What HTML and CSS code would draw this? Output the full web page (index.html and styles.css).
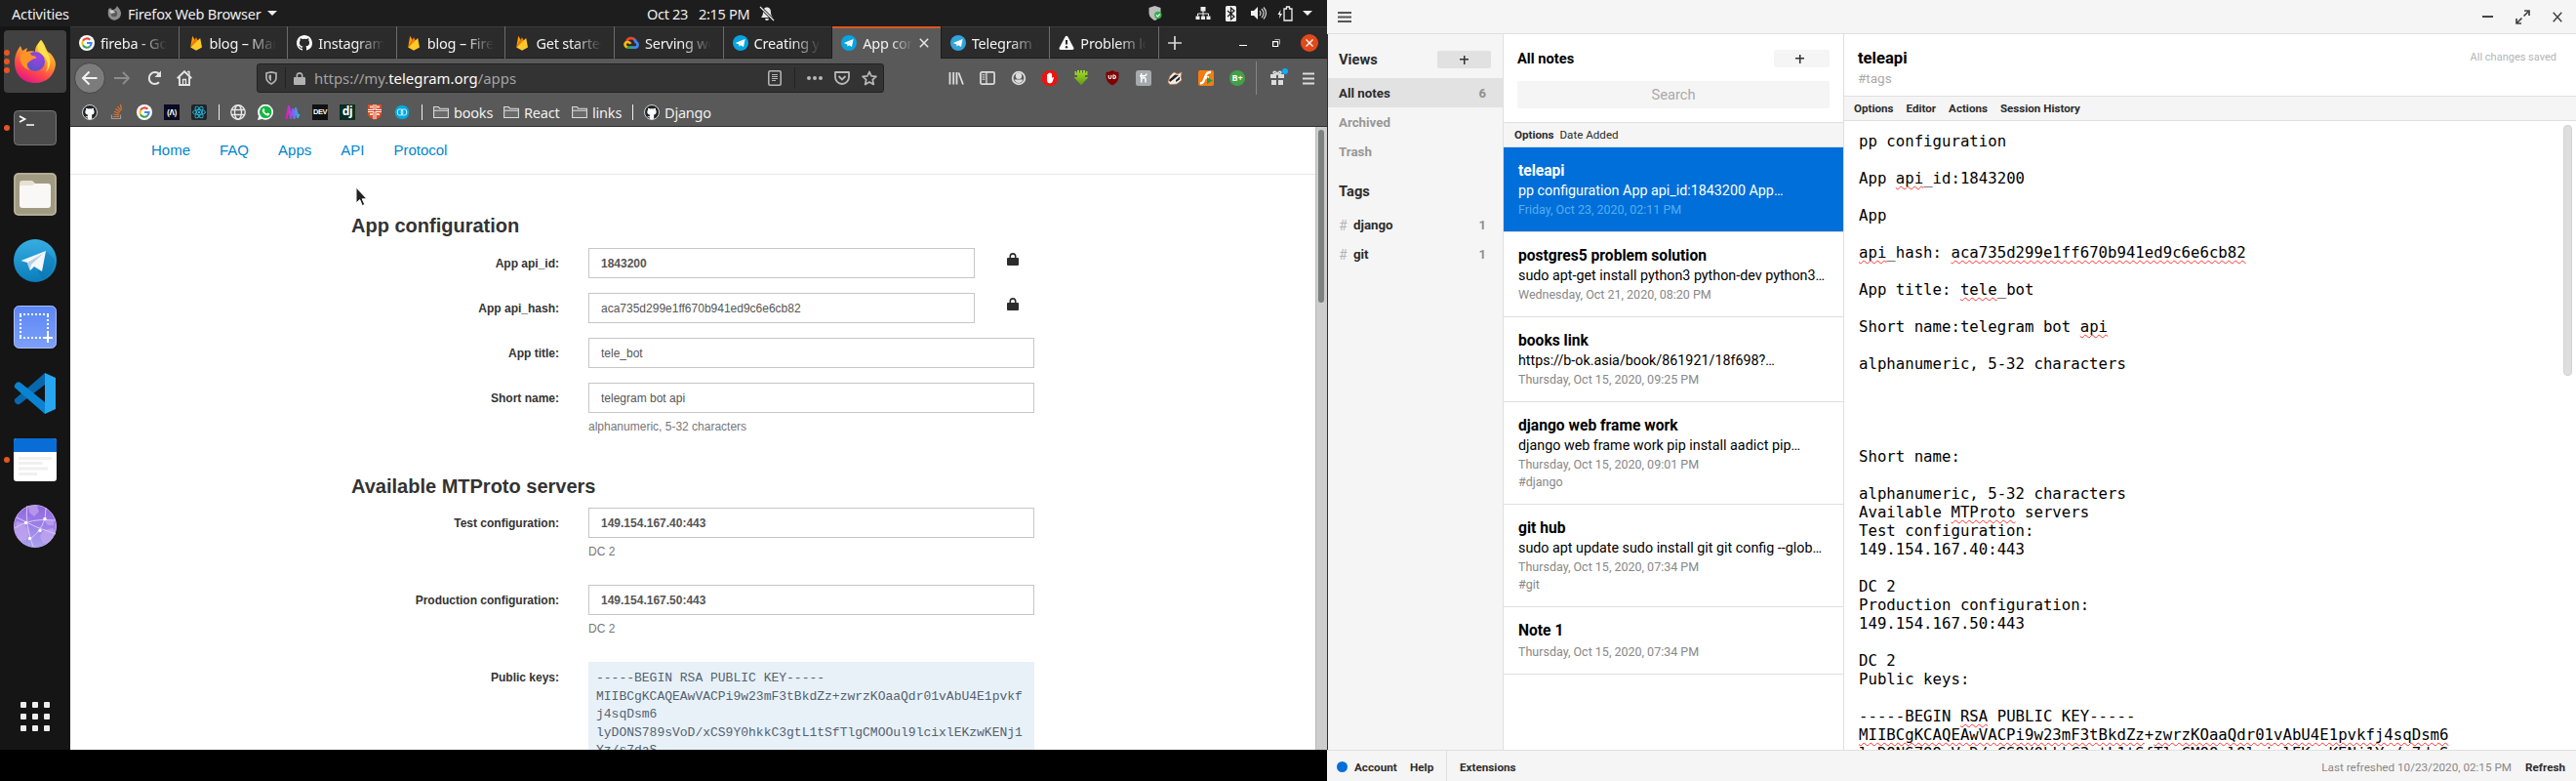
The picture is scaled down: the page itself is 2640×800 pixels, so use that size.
FILE: index.html
```
<!DOCTYPE html>
<html lang="en">
<head>
<meta charset="utf-8">
<title>Desktop</title>
<link rel="stylesheet" href="styles.css">
</head>
<body>
<svg class="defs" aria-hidden="true">
  <defs>
    <linearGradient id="fxBody" x1="0.8" y1="0" x2="0.3" y2="1"><stop offset="0" stop-color="#ffe14a"/><stop offset=".4" stop-color="#ff9a2b"/><stop offset=".7" stop-color="#ff4a48"/><stop offset="1" stop-color="#e31587"/></linearGradient>
    <radialGradient id="fxGlobe" cx=".6" cy=".3" r=".8"><stop offset="0" stop-color="#a23fe0"/><stop offset="1" stop-color="#4f55c9"/></radialGradient>
    <linearGradient id="tg" x1="0" y1="0" x2="0" y2="1"><stop offset="0" stop-color="#37aee2"/><stop offset="1" stop-color="#0a7dbb"/></linearGradient>
    <linearGradient id="shot" x1="0" y1="0" x2="0" y2="1"><stop offset="0" stop-color="#5b86f5"/><stop offset="1" stop-color="#7da0f8"/></linearGradient>
    <linearGradient id="web" x1="0" y1="0" x2="0" y2="1"><stop offset="0" stop-color="#9163e0"/><stop offset="1" stop-color="#a9a2ee"/></linearGradient>
    <linearGradient id="wave" x1="0" y1="0" x2="1" y2="0"><stop offset="0" stop-color="#e11bb8"/><stop offset=".5" stop-color="#8a5cf0"/><stop offset="1" stop-color="#17c3e6"/></linearGradient>
    <linearGradient id="dl" x1="0" y1="0" x2="0" y2="1"><stop offset="0" stop-color="#a4dc2a"/><stop offset="1" stop-color="#5f9a10"/></linearGradient>
  </defs>
  <symbol id="i-google" viewBox="0 0 16 16"><circle cx="8" cy="8" r="8" fill="#fff"/><g fill="none" stroke-width="2.1"><path d="M11.3 4.7A4.6 4.6 0 0 0 4 5.8" stroke="#ea4335"/><path d="M4 5.800a4.600 4.600 0 0 0 0 4.500" stroke="#fbbc05"/><path d="M4 10.300a4.600 4.600 0 0 0 7 1.300" stroke="#34a853"/><path d="M11 11.600A4.600 4.600 0 0 0 12.600 8H8" stroke="#4285f4"/></g></symbol>
  <symbol id="i-firebase" viewBox="0 0 16 16"><path d="M2.200 12.500 4.200.7l2.400 4z" fill="#ffa000"/><path d="M2.200 12.500 8 2.200l2 3.500z" fill="#f57c00"/><path d="M2.200 12.500 12.200 3l1.800 9.600-6 3.200z" fill="#ffca28"/></symbol>
  <symbol id="i-github" viewBox="0 0 16 16"><path fill-rule="evenodd" d="M8 0C3.600 0 0 3.600 0 8c0 3.500 2.300 6.500 5.500 7.600.4.100.5-.2.500-.4v-1.500c-2.200.5-2.700-.9-2.700-.9-.4-.9-.9-1.200-.9-1.200-.7-.5.100-.5.100-.5.800.1 1.200.8 1.200.8.700 1.200 1.900.9 2.300.7.100-.5.300-.9.500-1.100-1.800-.2-3.600-.9-3.600-4 0-.9.300-1.600.8-2.100-.1-.2-.4-1 .1-2.100 0 0 .7-.2 2.200.8a7.500 7.500 0 0 1 4 0c1.500-1 2.200-.8 2.200-.8.400 1.100.2 1.900.1 2.100.5.600.8 1.300.8 2.100 0 3.100-1.900 3.700-3.700 3.900.3.300.600.800.600 1.500v2.200c0 .200.100.500.600.400A8 8 0 0 0 16 8c0-4.400-3.600-8-8-8z"/></symbol>
  <symbol id="i-ghbadge" viewBox="0 0 16 16"><circle cx="8" cy="8" r="7.500" fill="#1f2328" stroke="#d6d6d6" stroke-width="1"/><path fill="#fff" d="M4.200 3.700c.9 0 1.600.4 2 .8a8 8 0 0 1 3.600 0c.4-.4 1.100-.8 2-.8.3.8.2 1.400.1 1.700 1.500 2 .8 4.900-2.200 5.200.3.300.5.800.5 1.400v2.800l-2.200.4-2.200-.4v-1.600c-1.300.2-1.800-.4-2.300-1.200 1 .1 1.100.6 2.300.3 0-.6.2-1.400.5-1.700-3-.3-3.700-3.200-2.200-5.200C4 5.100 3.900 4.500 4.200 3.700z"/></symbol>
  <symbol id="i-gcloud" viewBox="0 0 16 16"><g fill="none" stroke-width="2.700"><path d="M3.200 7C3.800 4.200 6 2.900 8.300 3.100c1.500.1 2.600.8 3.400 2" stroke="#ea4335"/><path d="M11 4.500c1 .6 1.500 1.600 1.700 2.700 2.600.6 2.500 5.400-.7 5.400H8" stroke="#4285f4"/><path d="M9 12.600H5c-1 0-1.600-.3-2-.6" stroke="#34a853"/><path d="M3.600 12.400C.4 10.800 1.200 7 4.400 7c1.300 0 2.200.7 2.800 1.900" stroke="#fbbc05"/></g></symbol>
  <symbol id="i-telegram" viewBox="0 0 16 16"><circle cx="8" cy="8" r="8" fill="#08a4e0"/><path d="M2.800 8 12.600 4.100 11 12 8 10.200l-1.400 1.600-.3-2.300z" fill="#fff"/><path d="m6.300 9.500 4.200-3.600" stroke="#bfe2f5" stroke-width=".7"/></symbol>
  <symbol id="i-telegram2" viewBox="0 0 16 16"><circle cx="8" cy="8" r="8" fill="#32a3dc"/><path d="M2.800 8 12.600 4.100 11 12 8 10.200l-1.400 1.600-.3-2.300z" fill="#fff"/><path d="m6.300 9.500 4.200-3.600" stroke="#bfe2f5" stroke-width=".7"/></symbol>
  <symbol id="i-warn" viewBox="0 0 16 16"><path d="M8 .8c.6 0 1 .3 1.300.8l6 11.200c.6 1.100 0 2.200-1.300 2.200H2c-1.300 0-1.900-1.100-1.300-2.200l6-11.200C7 1.100 7.400.8 8 .8z" fill="#f9f9fa"/><path d="M8 5v4.500" stroke="#2b2b2b" stroke-width="2"/><circle cx="8" cy="12.200" r="1.200" fill="#2b2b2b"/></symbol>
  <symbol id="i-folder" viewBox="0 0 16 16"><path d="M.6 13.500v-11h4.700l1.300 1.700h8.800v9.300zM.6 6.200h14.800" fill="#8a8a8a" fill-opacity=".35" stroke="#dadada" stroke-width="1.100"/></symbol>
  <symbol id="i-lock" viewBox="0 0 12 13"><path d="M3.300 6V3.600a2.700 2.700 0 0 1 5.400 0V6" fill="none" stroke="currentColor" stroke-width="1.600"/><rect x="0" y="5" width="12" height="8" rx="1" fill="currentColor"/></symbol>
</svg>

<main class="desktop">
<section class="screen-left">
  <header class="topbar">
    <span class="activities">Activities</span>
    <span class="appmenu">
      <svg width="15" height="15" viewBox="0 0 15 15"><path d="M1 3.500 3 2l2 2c3 0 4-2 5-4 1 2 4 4 4 7.500a6.500 6.500 0 0 1-13.300 1z" fill="#8d8d8d"/><circle cx="7" cy="8" r="3.200" fill="#5a5a5a"/><path d="M2 5c3-1 5 0 6 2-2 0-3 1-4 1z" fill="#cfcfcf"/></svg>
      <span class="appname">Firefox Web Browser</span><i class="caret"></i>
    </span>
    <span class="clock"><span class="date">Oct 23</span><span class="time">2:15 PM</span>
      <svg width="16" height="16" viewBox="0 0 16 16"><path d="M8 1.500c3 0 4 2.500 4 5 0 3 1 4 2 5.500H2c1-1.500 2-2.500 2-5.500 0-2.500 1-5 4-5zM6 13h4a2 2 0 0 1-4 0z" fill="#e8e8e8"/><path d="m1 1 14 14" stroke="#1d1d1d" stroke-width="3"/><path d="m1 1 14 14" stroke="#e8e8e8" stroke-width="1.200"/></svg>
    </span>
    <span class="tray">
      <svg class="t-shield" width="14" height="16" viewBox="0 0 14 16"><path d="M6.500 0 12.500 2v5c0 4-3 6.500-6 8-3-1.500-6-4-6-8V2z" fill="#bdbdbd"/><circle cx="9.800" cy="9.500" r="3.700" fill="#31b04a"/><path d="m8 9.500 1.500 1.400 2.300-2.600" fill="none" stroke="#fff" stroke-width="1.100"/></svg>
      <svg class="t-net" width="16" height="14" viewBox="0 0 16 14"><path d="M5.500 0h5v4.500h-5zM.5 9.500h4V13h-4zM6 9.500h4V13H6zM11.500 9.500h4V13h-4z" fill="#efefef"/><path d="M8 4v5.500M2.500 9.500V7h11v2.500" fill="none" stroke="#efefef"/></svg>
      <svg class="t-bt" width="11" height="16" viewBox="0 0 11 16"><rect width="11" height="16" rx="1.500" fill="#efefef"/><path d="m2 5 7 6-3.500 3V2L9 5l-7 6" fill="none" stroke="#1d1d1d" stroke-width="1.200"/></svg>
      <svg class="t-vol" width="16" height="15" viewBox="0 0 16 15"><path d="M0 5h3l4-4v13l-4-4H0z" fill="#efefef"/><path d="M9 5q2 2.500 0 5M11 3q4 4.500 0 9M13 1.500q5 6 0 12" fill="none" stroke="#cfcfcf" stroke-width="1.200"/></svg>
      <svg class="t-bat" width="16" height="16" viewBox="0 0 16 16"><path d="M3.500 4 .5 9H2.500L2 13 5 8H3z" fill="#efefef"/><path d="M7 3h2.500V1h3v2H15v12H7z" fill="none" stroke="#efefef" stroke-width="1.300"/></svg>
      <i class="caret"></i>
    </span>
  </header>

  <div class="below">
    <nav class="dock">
      <div class="slot active"><span class="dots"><i></i><i></i><i></i></span>
        <svg width="44" height="46" viewBox="0 0 44 46"><path d="M22 45C9 45 1 36 1 24 1 16 4 11 7 7l2 5 5-3-1 4c4-1 7-1 9 0C22 7 25 5 28 1c4 4 5 9 7 12l3 2c3 4 5 7 5 11-1 11-9 19-21 19z" fill="url(#fxBody)"/><circle cx="22" cy="23" r="10" fill="url(#fxGlobe)"/><path d="M7 15c5-3 9-1 12 2 3 0 4 1 4 3-4 0-5 2-8 4-2 2-1 5 2 8-8-2-12-9-10-17z" fill="#ff9426"/><path d="M28 1c4 5 4 10 7 14 3 5 4 13-2 19 4-9 1-15-6-20-4-3-3-9 1-13z" fill="#ffe04c"/></svg></div>
      <div class="slot"><span class="dots"><i></i></span>
        <svg width="44" height="44" viewBox="0 0 44 44"><rect x=".5" y="4.500" width="43" height="35" rx="4" fill="#4b4b4b" stroke="#777"/><path d="m6 10 5.500 3L6 16M13 19h8" fill="none" stroke="#fff" stroke-width="1.700"/></svg></div>
      <div class="slot">
        <svg width="44" height="44" viewBox="0 0 44 44"><rect width="44" height="44" rx="5" fill="#a19a82"/><rect x="1" y="1" width="42" height="42" rx="4" fill="none" stroke="#c3beac"/><path d="M6 11q0-3 3-3h9q2 0 4 3v4H6z" fill="#e5e1d6"/><path d="M6 15q0-2 3-2h10l3-2h13q3 0 3 3v19q0 3-3 3H9q-3 0-3-3z" fill="#f9f8f6"/></svg></div>
      <div class="slot">
        <svg width="44" height="44" viewBox="0 0 44 44"><circle cx="22" cy="22" r="22" fill="url(#tg)"/><path d="m25 33 8-21 9 9c0 10-5 17-13 20z" fill="#056ba5" opacity=".35"/><path d="M7.500 22 33 12l-4 21-8-5-4 4-3-8z" fill="#f3f7fb"/><path d="m14 24 17-10-13 12-1.500 6z" fill="#b9cfe4"/></svg></div>
      <div class="slot">
        <svg width="44" height="44" viewBox="0 0 44 44"><rect x=".5" y=".5" width="43" height="43" rx="5" fill="url(#shot)" stroke="#a9c0fb"/><path d="M6 9h30M7 10v23M6 33h24M35 10v18" fill="none" stroke="#fff" stroke-width="2" stroke-dasharray="2 2"/><path d="M35 28v10M30 33h10" stroke="#fff" stroke-width="2"/></svg></div>
      <div class="slot">
        <svg width="44" height="44" viewBox="0 0 44 44"><path d="M1 28 32 1v12L6 33q-2 1-4-1-2-2-1-4z" fill="#0868ad"/><path d="M2 12q2-3 5-1l25 20v12L1 16q-1-2 1-4z" fill="#0a84d0"/><path d="m32 1 11 5v32l-11 5z" fill="#27a7f2"/></svg></div>
      <div class="slot"><span class="dots"><i></i></span>
        <svg width="44" height="44" viewBox="0 0 44 44"><rect width="44" height="44" rx="3" fill="#fff"/><path d="M0 14V3q0-3 3-3h38q3 0 3 3v11z" fill="#086dd6"/><path d="M5 20.500h34M5 25.500h24.500M5 31h30M5 36.500h19" stroke="#f0f0f0" stroke-width="3"/></svg></div>
      <div class="slot">
        <svg width="44" height="44" viewBox="0 0 44 44"><circle cx="22" cy="22" r="21.500" fill="url(#web)" stroke="#c3a9f2"/><path d="M15 1h9l2 6-5 5-5-4zM3 17l8 2 5 9-3 8-6 1-6-10zM31 26l9-2 3 4-6 10-7 2-3-8zM31 16h10v5h-6z" fill="#c3a6ef" opacity=".7"/><path d="M14 1q-3 17 6 42M33 3q1 20-17 33M1 24q16-11 42-8M3 13q20 11 40 17" fill="none" stroke="#d8c8fa"/><g fill="#fff"><circle cx="12.500" cy="18.500" r="1.700"/><circle cx="32" cy="14.500" r="1.700"/><circle cx="27" cy="26.500" r="1.700"/><circle cx="16.500" cy="34.500" r="1.700"/></g></svg></div>
      <div class="apps"><i></i><i></i><i></i><i></i><i></i><i></i><i></i><i></i><i></i></div>
    </nav>

    <div class="firefox">
      <div class="tabs">
        <div class="tab"><svg width="16" height="16"><use href="#i-google"/></svg><span>fireba - Goo</span></div>
        <div class="tab"><svg width="16" height="16"><use href="#i-firebase"/></svg><span>blog – Mana</span></div>
        <div class="tab"><svg width="16" height="16" fill="#fff"><use href="#i-github"/></svg><span>Instagram/</span></div>
        <div class="tab"><svg width="16" height="16"><use href="#i-firebase"/></svg><span>blog – Fireb</span></div>
        <div class="tab"><svg width="16" height="16"><use href="#i-firebase"/></svg><span>Get started</span></div>
        <div class="tab"><svg width="16" height="16"><use href="#i-gcloud"/></svg><span>Serving we</span></div>
        <div class="tab last"><svg width="16" height="16"><use href="#i-telegram"/></svg><span>Creating yo</span></div>
        <div class="tab current"><svg width="16" height="16"><use href="#i-telegram"/></svg><span>App config</span><svg class="x" width="10" height="10" viewBox="0 0 10 10"><path d="m.8.8 8.400 8.400m0-8.400L.8 9.200" stroke="#e6e6e6" stroke-width="1.500"/></svg></div>
        <div class="tab"><svg width="16" height="16"><use href="#i-telegram2"/></svg><span>Telegram B</span></div>
        <div class="tab"><svg width="16" height="16"><use href="#i-warn"/></svg><span>Problem loa</span></div>
        <svg class="newtab" width="14" height="14" viewBox="0 0 14 14"><path d="M7 0v14M0 7h14" stroke="#d8d8d8" stroke-width="1.700"/></svg>
        <div class="wincontrols">
          <svg width="8" height="8" viewBox="0 0 8 8"><path d="M0 6.500h8" stroke="#fff"/></svg>
          <svg width="8" height="8" viewBox="0 0 8 8"><path d="M.6 2.600h5v5h-5z" fill="none" stroke="#fff" stroke-width="1.200"/><path d="M2.500.500h5v5" fill="none" stroke="#aaa"/></svg>
          <svg width="18" height="18" viewBox="0 0 18 18"><circle cx="9" cy="9" r="9" fill="#e2491a"/><path d="m5.500 5.500 7 7m0-7-7 7" stroke="#fff" stroke-width="1.300"/></svg>
        </div>
      </div>

      <div class="toolbar">
        <span class="back"><svg width="18" height="16" viewBox="0 0 18 16"><path d="M16.500 8H2M8.500 1.500 2 8l6.500 6.500" fill="none" stroke="#f2f2f2" stroke-width="2"/></svg></span>
        <svg class="fwd" width="16" height="14" viewBox="0 0 16 14"><path d="M0 7h14.500M9 1l6 6-6 6" fill="none" stroke="#8d8d8d" stroke-width="1.900"/></svg>
        <svg class="reload" width="16" height="16" viewBox="0 0 16 16"><path d="M13 12.300A6 6 0 1 1 13.200 4" fill="none" stroke="#e4e4e4" stroke-width="2"/><path d="M15 .5V7H8.500z" fill="#e4e4e4"/></svg>
        <svg class="home" width="16" height="16" viewBox="0 0 16 16"><path d="m.7 8.200 7.300-7 7.300 7M3 7v8h10V7" fill="none" stroke="#e4e4e4" stroke-width="1.900"/><path d="M11 1.500h2v4M6.500 15V9.500h3V15" fill="none" stroke="#e4e4e4" stroke-width="1.300"/></svg>
        <div class="urlbar">
          <svg width="12" height="14" viewBox="0 0 12 14"><path d="M6 .9 11 2v4.500c0 3-2 5-5 6.500C3 11.500 1 9.500 1 6.500V2z" fill="none" stroke="#b1b1b1" stroke-width="1.700"/><path d="M6 3.500v6.800C4 9 3.500 8 3.500 6.500V4z" fill="#b1b1b1"/></svg>
          <i class="bar"></i>
          <svg class="ulock" width="12" height="13"><use href="#i-lock"/></svg>
          <span class="url">https://my.<b>telegram.org</b>/apps</span>
          <svg class="reader" width="14" height="16" viewBox="0 0 14 16"><rect x=".8" y=".8" width="12.400" height="14.400" rx="1.500" fill="none" stroke="#b8b8b8" stroke-width="1.500"/><path d="M4 4.500h6M4 6.500h6M4 8.500h6M4 10.500h4" stroke="#b8b8b8"/></svg>
          <i class="bar"></i>
          <svg class="more" width="16" height="4" viewBox="0 0 16 4"><g fill="#b8b8b8"><circle cx="2" cy="2" r="2"/><circle cx="8" cy="2" r="2"/><circle cx="14" cy="2" r="2"/></g></svg>
          <svg width="16" height="14" viewBox="0 0 16 14"><path d="M1 1h14v5a7 7 0 0 1-14 0z" fill="none" stroke="#b8b8b8" stroke-width="1.800" stroke-linejoin="round"/><path d="m4.500 5 3.500 3.500L11.500 5" fill="none" stroke="#b8b8b8" stroke-width="1.800"/></svg>
          <svg width="16" height="16" viewBox="0 0 16 16"><path d="m8 1.500 2 4.400 4.900.5-3.600 3.300 1 4.800L8 12l-4.300 2.500 1-4.800L1.100 6.400 6 5.900z" fill="none" stroke="#b8b8b8" stroke-width="1.700" stroke-linejoin="round"/></svg>
        </div>
        <div class="addons">
          <svg width="16" height="16" viewBox="0 0 16 16"><path d="M1.500 2v12.500M5.200 2v12.500M8.500 2v12.500M10.500 2.500l4.500 12" stroke="#dcdcdc" stroke-width="1.800"/></svg>
          <svg width="16" height="14" viewBox="0 0 16 14"><rect x=".9" y=".9" width="14.200" height="12.200" rx="1.500" fill="none" stroke="#dcdcdc" stroke-width="1.700"/><path d="M7 1v12" stroke="#dcdcdc" stroke-width="1.300"/><path d="M2.500 3.800h3M2.500 6h3M2.500 8.200h3" stroke="#dcdcdc"/></svg>
          <svg width="16" height="16" viewBox="0 0 16 16"><circle cx="8" cy="8" r="6.300" fill="none" stroke="#dcdcdc" stroke-width="1.800"/><circle cx="8" cy="5.800" r="3.200" fill="#dcdcdc"/><path d="M3.500 9.500h9Q11 13 8 13T3.500 9.500z" fill="#dcdcdc"/></svg>
          <svg width="16" height="16" viewBox="0 0 16 16"><path d="M4.700 0h6.600L16 4.700v6.600L11.300 16H4.700L0 11.300V4.700z" fill="#ed1310"/><path d="M5 8V4.300q.7-.8 1.200 0V3.200q.8-.9 1.300 0v-.4q.7-.8 1.300 0v.8q.8-.7 1.300 0V8l1.200-1q1-.2.7.7L10.500 12q-1 1.500-3 1.200Q5 13 5 10z" fill="#fff"/></svg>
          <svg width="16" height="16" viewBox="0 0 16 16"><path d="M1.500 1h1.500v1.500h1V0h2v2.500h1V0h2v2.500h1V0h2v2.500h1V1h1.500v4H12v2h3.500L8 15.300.5 7H4V5H1.500z" fill="url(#dl)"/></svg>
          <svg width="16" height="16" viewBox="0 0 16 16"><path d="M8 0q3 1.800 6.500 2v5q0 5-6.500 8.500Q1.500 12 1.500 7V2Q5 1.800 8 0z" fill="#800000"/><path d="M4.200 5v2q0 1.500 1.300 1.500T6.800 7V5M9 5v3.500h.8q1.700 0 1.700-1.700T9.800 5z" fill="none" stroke="#fff" stroke-width="1.100"/></svg>
          <svg width="16" height="16" viewBox="0 0 16 16"><rect width="16" height="16" rx="2.500" fill="#a5aaaf"/><path d="M5.700 3v9.500M5.700 9q3.500-3 4.300 0v3.500M4 5.800h4.500q2.300 0 2.500-2.300" fill="none" stroke="#fff" stroke-width="1.500"/></svg>
          <svg width="16" height="16" viewBox="0 0 16 16"><path d="M1 12 3 6l4-4 4 2 4-2-1 5 1 3-5 4-7 .5z" fill="#eee" stroke="#e87e35" stroke-width=".7"/><path d="m2 10 6-5.500L12 5l-5 4-4 3zM9 10l4-3.500v3L9 12z" fill="#222"/></svg>
          <svg width="16" height="16" viewBox="0 0 16 16"><rect width="16" height="16" rx="2" fill="#f57c11"/><path d="M13 2Q9 1.500 7.500 6l-2 5Q5 13 2 13.500M6 7.500h5" fill="none" stroke="#fff" stroke-width="2.400"/><path d="m9 7 6 3.500L9 14z" fill="#1b9c48"/></svg>
          <span class="bplus">B+</span>
        </div>
        <i class="tbsep"></i>
        <svg class="gift" width="18" height="18" viewBox="0 0 18 18"><path d="M0 6h6v4H0zM8 6h6v4H8zM1 12h5v5H1zM8 12h5v5H8z" fill="#dcdcdc"/><path d="M7 6Q5 2 3 4q0 2 4 2 4 0 4-2Q9 2 7 6z" fill="none" stroke="#dcdcdc" stroke-width="1.400"/><circle cx="15" cy="3" r="3" fill="#0ab0fb"/></svg>
        <svg class="burger" width="12" height="13" viewBox="0 0 12 13"><path d="M0 1.500h12M0 6.500h12M0 11.500h12" stroke="#dcdcdc" stroke-width="2"/></svg>
      </div>

      <div class="bookmarks">
        <svg width="16" height="16"><use href="#i-ghbadge"/></svg>
        <svg width="16" height="16" viewBox="0 0 16 16"><path d="M2.500 10.500v4h9v-4" fill="none" stroke="#9a9a9a" stroke-width="1.200"/><path d="M4.200 12.500H10M4.300 10l5.700.8M5 7.300l5.300 2M6.500 4.500l4.500 3.300M8.500 2l3.300 4.500M11.300 0l1.300 5.500" stroke="#e0742a" stroke-width="1.200"/></svg>
        <svg width="16" height="16"><use href="#i-google"/></svg>
        <span class="bm-fcc">(Λ)</span>
        <svg width="16" height="16" viewBox="0 0 16 16"><rect width="16" height="16" rx="2" fill="#20232a"/><g fill="none" stroke="#22b8d8" stroke-width=".9"><ellipse cx="8" cy="8" rx="6.500" ry="2.500"/><ellipse cx="8" cy="8" rx="6.500" ry="2.500" transform="rotate(60 8 8)"/><ellipse cx="8" cy="8" rx="6.500" ry="2.500" transform="rotate(120 8 8)"/></g><circle cx="8" cy="8" r="1.200" fill="#22b8d8"/></svg>
        <i class="bmsep"></i>
        <svg width="16" height="16" viewBox="0 0 16 16"><g fill="none" stroke="#e6e6e6" stroke-width="1.400"><circle cx="8" cy="8" r="7.200"/><ellipse cx="8" cy="8" rx="3.500" ry="7.200"/><path d="M1.500 5.500h13M1.500 10.500h13"/></g></svg>
        <svg width="16" height="16" viewBox="0 0 16 16"><path d="M0 16 1.200 12A8 8 0 1 1 4.500 15z" fill="#fff"/><circle cx="8.200" cy="7.800" r="6.300" fill="#12b83f"/><path d="M5.500 4.500q1-1 1.500.5l.4 1-.7 1q1 1.800 2.800 2.500l1-1 1.800 1q.1 1.500-1.500 2-2 .3-4.500-2.200T5.500 4.500z" fill="#fff"/></svg>
        <svg width="16" height="16" viewBox="0 0 16 16"><path d="M1.500 15 4 2l2 12 2-9 1.500 9L11 4l2 9 1.500-3" fill="none" stroke="url(#wave)" stroke-width="2.200" stroke-linejoin="round"/></svg>
        <span class="bm-dev">DEV</span>
        <span class="bm-dj">dj</span>
        <svg width="16" height="16" viewBox="0 0 16 16"><path d="M1 0h14v10q0 3-7 6-7-3-7-6z" fill="#dd4b2a"/><path d="M8 0v15M1 6.500h14" stroke="#fff" stroke-width="3"/><path d="M8 0v15M1 6.500h14" stroke="#d43a22" stroke-width="1"/><path d="M3 2.500h3M10 2.500h3M3 10h3M10 10h3" stroke="#f6dcae" stroke-width="2"/></svg>
        <svg width="16" height="16" viewBox="0 0 16 16"><circle cx="8" cy="8" r="7.300" fill="#00a9e0"/><g fill="none" stroke="#d9f3fc" stroke-width="1"><rect x="3.300" y="5" width="5.500" height="6" rx="2"/><rect x="7.200" y="5" width="5.500" height="6" rx="2"/></g></svg>
        <i class="bmsep"></i>
        <span class="bm f1"><svg width="16" height="16"><use href="#i-folder"/></svg>books</span>
        <span class="bm f2"><svg width="16" height="16"><use href="#i-folder"/></svg>React</span>
        <span class="bm f3"><svg width="16" height="16"><use href="#i-folder"/></svg>links</span>
        <i class="bmsep s3"></i>
        <span class="bm f4"><svg width="16" height="16"><use href="#i-ghbadge"/></svg>Django</span>
      </div>

      <div class="viewport">
        <div class="page">
          <nav class="site-nav"><a>Home</a><a>FAQ</a><a>Apps</a><a>API</a><a>Protocol</a></nav>
          <div class="form">
            <svg class="pointer" width="14" height="22" viewBox="0 0 14 22"><path d="M1 1v16l3.700-3.400 2.500 6 2.600-1.100-2.600-5.700H12z" fill="#222" stroke="#fff" stroke-width="1"/></svg>
            <h3>App configuration</h3>
            <div class="row"><label>App api_id:</label><div class="field short strong">1843200</div><svg class="lk" width="12" height="13"><use href="#i-lock"/></svg></div>
            <div class="row"><label>App api_hash:</label><div class="field short">aca735d299e1ff670b941ed9c6e6cb82</div><svg class="lk" width="12" height="13"><use href="#i-lock"/></svg></div>
            <div class="row"><label>App title:</label><div class="field">tele_bot</div></div>
            <div class="row"><label>Short name:</label><div><div class="field">telegram bot api</div><p class="help">alphanumeric, 5-32 characters</p></div></div>
            <h3 class="second">Available MTProto servers</h3>
            <div class="row srv"><label>Test configuration:</label><div><div class="field strong">149.154.167.40:443</div><p class="help">DC 2</p></div></div>
            <div class="row srv"><label>Production configuration:</label><div><div class="field strong">149.154.167.50:443</div><p class="help">DC 2</p></div></div>
            <div class="row"><label>Public keys:</label><pre class="keys">-----BEGIN RSA PUBLIC KEY-----
MIIBCgKCAQEAwVACPi9w23mF3tBkdZz+zwrzKOaaQdr01vAbU4E1pvkf
j4sqDsm6
lyDONS789sVoD/xCS9Y0hkkC3gtL1tSfTlgCMOOul9lcixlEKzwKENj1
Yz/s7daS</pre></div>
          </div>
        </div>
        <div class="scroll"><i></i></div>
      </div>
    </div>
  </div>
</section>

<section class="notes">
  <header class="ntop">
    <svg width="14" height="11" viewBox="0 0 14 11"><path d="M0 1h14M0 5.500h14M0 10h14" stroke="#555" stroke-width="1.800"/></svg>
    <span class="ncontrols">
      <svg width="11" height="16" viewBox="0 0 11 16"><path d="M0 8h11" stroke="#444" stroke-width="2"/></svg>
      <svg width="15" height="15" viewBox="0 0 15 15"><path d="M9 1h5v5M14 1 8.500 6.500M1 9v5h5M1 14l5.500-5.500" fill="none" stroke="#444" stroke-width="1.700"/></svg>
      <svg width="10" height="11" viewBox="0 0 10 11"><path d="m.7.7 8.600 9.600m0-9.600L.7 10.300" stroke="#444" stroke-width="1.500"/></svg>
    </span>
  </header>
  <div class="ncols">
    <aside class="side">
      <div class="shead"><h2>Views</h2><span class="plus"></span></div>
      <div class="view sel"><span>All notes</span><em>6</em></div>
      <div class="view dim"><span>Archived</span></div>
      <div class="view dim"><span>Trash</span></div>
      <h2 class="tagshead">Tags</h2>
      <div class="view tag"><small>#</small><span>django</span><em>1</em></div>
      <div class="view tag"><small>#</small><span>git</span><em>1</em></div>
    </aside>
    <div class="list">
      <div class="lhead">
        <div class="lrow"><h2>All notes</h2><span class="plus"></span></div>
        <div class="search">Search</div>
      </div>
      <div class="lopts"><b>Options</b><span>Date Added</span></div>
      <article class="note selected"><h4>teleapi</h4><p>pp configuration App api_id:1843200 App…</p><time>Friday, Oct 23, 2020, 02:11 PM</time></article>
      <article class="note"><h4>postgres5 problem solution</h4><p>sudo apt-get install python3 python-dev python3…</p><time>Wednesday, Oct 21, 2020, 08:20 PM</time></article>
      <article class="note"><h4>books link</h4><p>https://b-ok.asia/book/861921/18f698?…</p><time>Thursday, Oct 15, 2020, 09:25 PM</time></article>
      <article class="note"><h4>django web frame work</h4><p>django web frame work pip install aadict pip…</p><time>Thursday, Oct 15, 2020, 09:01 PM</time><time>#django</time></article>
      <article class="note"><h4>git hub</h4><p>sudo apt update sudo install git git config --glob…</p><time>Thursday, Oct 15, 2020, 07:34 PM</time><time>#git</time></article>
      <article class="note bare"><h4>Note 1</h4><time>Thursday, Oct 15, 2020, 07:34 PM</time></article>
    </div>
    <div class="editor">
      <div class="ehead"><div><h1>teleapi</h1><p>#tags</p></div><span>All changes saved</span></div>
      <div class="emenu"><b>Options</b><b>Editor</b><b>Actions</b><b>Session History</b></div>
      <div class="ebody">
<pre class="text">pp configuration

App <u>api</u>_id:1843200

App

<u>api</u>_hash: <u>aca735d299e1ff670b941ed9c6e6cb82</u>

App title: <u>tele</u>_bot

Short name:telegram bot <u>api</u>

alphanumeric, 5-32 characters




Short name:

alphanumeric, 5-32 characters
Available <u>MTProto</u> servers
Test configuration:
149.154.167.40:443

DC 2
Production configuration:
149.154.167.50:443

DC 2
Public keys:

-----BEGIN <u>RSA</u> PUBLIC KEY-----
<u>MIIBCgKCAQEAwVACPi9w23mF3tBkdZz</u>+<u>zwrzKOaaQdr01vAbU4E1pvkfj4sqDsm6</u>
lyDONS789sVoD/xCS9Y0hkkC3gtL1tSfTlgCMOOul9lcixlEKzwKENj1Yz/s7daS</pre>
        <i class="ethumb"></i>
      </div>
    </div>
  </div>
  <footer class="nfoot">
    <i class="dot"></i><b class="acc">Account</b><b class="hlp">Help</b><i class="fsep"></i><b class="ext">Extensions</b>
    <span class="fr">Last refreshed 10/23/2020, 02:15 PM</span><b class="rf">Refresh</b>
  </footer>
</section>
</main>
</body>
</html>
```
FILE: styles.css
```
* { box-sizing: border-box; }
body { margin: 0; background: #000; overflow: hidden; }
h1, h2, h3, h4, p, pre { margin: 0; }
i, em { font-style: normal; }
svg { display: block; flex: none; }
.defs { position: absolute; width: 0; height: 0; }
.desktop { display: flex; width: 2640px; height: 800px; overflow: hidden; }

/* Ubuntu screen */
.screen-left { width: 1360px; height: 768px; display: flex; flex-direction: column; background: #151515; font-family: "Noto Sans", sans-serif; font-size: 14.5px; }
.topbar { height: 27px; flex: none; background: #1d1d1d; color: #eee; display: flex; align-items: center; }
.activities { width: 98px; padding-left: 12px; letter-spacing: -.15px; }
.appmenu { width: 553px; padding-left: 12px; display: flex; align-items: center; }
.appname { width: 137px; margin-left: 6px; white-space: nowrap; letter-spacing: -.2px; }
.caret { width: 0; height: 0; border: 5px solid transparent; border-top-color: #eee; border-bottom: 0; margin-left: 6px; }
.clock { display: flex; align-items: center; padding-left: 12px; width: 526px; white-space: nowrap; letter-spacing: -.3px; }
.date { width: 53px; }
.time { width: 62px; }
.tray { display: flex; align-items: center; }
.t-net { margin-left: 34px; }
.t-bt { margin-left: 15px; }
.t-vol { margin-left: 15px; }
.t-bat { margin-left: 11px; }
.tray .caret { margin-left: 10px; }
.below { display: flex; flex: 1; min-height: 0; }

/* Dock */
.dock { width: 72px; flex: none; background: #151515; padding: 4px 4px 0; display: flex; flex-direction: column; gap: 4px; }
.slot { height: 64px; border-radius: 4px; display: flex; align-items: center; justify-content: center; position: relative; flex: none; }
.slot.active { background: #414141; }
.dots { position: absolute; left: 0; top: 0; height: 100%; display: flex; flex-direction: column; justify-content: center; gap: 3px; }
.dots i { width: 6px; height: 6px; border-radius: 50%; background: #e95420; }
.apps { margin: auto auto 19px; display: grid; grid-template-columns: repeat(3, 6px); gap: 6px; }
.apps i { height: 6px; background: #eee; border-radius: 1px; }

/* Browser */
.firefox { flex: 1; min-width: 0; display: flex; flex-direction: column; }
.tabs { height: 33px; flex: none; background: #2b2b2b; border-top: 1px solid #3c3c3c; border-bottom: 1px solid #1c1c1c; display: flex; align-items: center; }
.tab { width: 111.600px; height: 33px; margin: -1px 0; flex: none; display: flex; align-items: center; padding-left: 9px; border-right: 1px solid #6b6b6b; color: #f2f2f2; }
.tab span { width: 70px; margin-left: 6px; overflow: hidden; white-space: nowrap; letter-spacing: -.2px; -webkit-mask-image: linear-gradient(90deg, #000 55%, transparent 97%); mask-image: linear-gradient(90deg, #000 55%, transparent 97%); }
.tab.last { border-right-color: #1c1c1c; }
.tab.current { background: #595959; box-shadow: inset 0 2px #e2541f; border-right-color: #1c1c1c; }
.tab.current span { width: 53px; }
.x { margin-left: 5px; }
.newtab { margin-left: 9px; }
.wincontrols { margin-left: auto; margin-right: 9px; display: flex; align-items: center; gap: 26px; }
.wincontrols svg:last-child { margin-left: -5px; }
.toolbar { height: 40px; flex: none; background: #595959; display: flex; align-items: center; padding-left: 4px; }
.back { width: 32px; height: 32px; border-radius: 50%; background: #7c7c7c; border: 1px solid #454545; display: grid; place-items: center; }
.fwd { margin-left: 9px; }
.reload { margin-left: 17px; }
.home { margin-left: 15px; }
.urlbar { margin-left: 66px; width: 643px; height: 30px; background: #333; border: 1px solid #222; border-radius: 3px; display: flex; align-items: center; padding-left: 8px; color: #a3a3a3; }
.bar { width: 1px; height: 22px; background: #222; margin: 0 8px; }
.ulock { color: #b1b1b1; }
.url { margin-left: 9px; flex: 1; font-size: 14.900px; }
.url b { font-weight: 400; color: #fbfbfb; }
.reader { margin-right: 5px; }
.urlbar .more { margin-left: 4px; }
.urlbar .more ~ svg { margin-left: 12px; }
.urlbar svg:last-child { margin-right: 6px; }
.addons { margin-left: 66px; display: flex; align-items: center; gap: 16px; }
.bplus { width: 16px; height: 16px; border-radius: 50%; background: #43a047; color: #fff; font: bold 9px/16px "Noto Sans", sans-serif; text-align: center; }
.tbsep { width: 1px; height: 34px; background: #858585; margin-left: 11px; }
.gift { margin: -2px 0 0 14px; }
.burger { margin-left: 15px; }
.bookmarks { height: 30px; flex: none; background: #595959; border-bottom: 1px solid #2e2e2e; display: flex; align-items: center; gap: 12px; padding-left: 12px; color: #f0f0f0; }
.bmsep { width: 1px; height: 16px; background: #eee; margin: 0 -1px 0 0; }
.bm { display: flex; align-items: center; gap: 5px; white-space: nowrap; letter-spacing: -.2px; }
.f1 { width: 60px; }
.f2, .f3 { width: 58px; }
.s3 { margin: 0 -1px 0 -8px; }
.bm-fcc, .bm-dev, .bm-dj { width: 16px; height: 16px; color: #fff; text-align: center; font: bold 8px/16px "Noto Sans", sans-serif; letter-spacing: -.4px; }
.bm-fcc { background: #0a0a23; }
.bm-dev { background: #111; font-family: "Liberation Sans", sans-serif; font-size: 7.500px; }
.bm-dj { background: #092e20; font-size: 12px; line-height: 14px; }

.viewport { flex: 1; min-height: 0; display: flex; overflow: hidden; background: #fff; font-family: "Liberation Sans", Arial, sans-serif; }
.page { width: 1276px; overflow: hidden; color: #333; }
.site-nav { height: 49px; border-bottom: 1px solid #e7e7e7; padding-left: 83px; display: flex; gap: 30px; font-size: 15px; line-height: 48px; color: #0086d1; }
.form { padding-left: 288px; position: relative; font-size: 12px; }
.pointer { position: absolute; left: 292px; top: 12px; }
h3 { font-size: 20px; line-height: 24px; padding-top: 40px; height: 75px; }
.row { display: flex; height: 46px; }
.row.srv { height: 79px; }
.row label { width: 213px; margin-right: 30px; text-align: right; font-weight: bold; line-height: 32px; flex: none; }
.field { width: 457px; height: 31px; border: 1px solid #c6c6c6; padding-left: 12px; line-height: 30px; color: #555; }
.field.short { width: 396px; }
.strong { font-weight: bold; }
.lk { margin: 5px 0 0 33px; color: #2c2c2c; }
.help { color: #777; line-height: 18px; padding-top: 5px; }
h3.second { height: 82px; padding-top: 48px; }
.keys { width: 457px; height: 300px; background: #e8f1f8; padding: 8px; font: 13px/18.570px "Liberation Mono", monospace; color: #546172; }
.scroll { width: 12px; background: #cdcdcd; border-left: 1px solid #bfb8b2; padding: 3px 2px; }
.scroll i { display: block; width: 6px; height: 177px; border-radius: 3px; background: #7c8080; }

/* Notes app */
.notes { width: 1280px; height: 800px; background: #f5f5f5; font-family: Roboto, sans-serif; color: #2c2c2c; display: flex; flex-direction: column; }
.ntop { height: 35px; flex: none; border-bottom: 1px solid #dfdfdf; display: flex; align-items: center; justify-content: space-between; padding: 0 14px 0 11px; }
.ncontrols { display: flex; align-items: center; gap: 23px; }
.ncols { flex: 1; min-height: 0; display: flex; border-left: 1px solid #2e2e2e; }
.side { width: 180px; flex: none; border-right: 1px solid #dfdfdf; font-size: 13px; }
h2 { font-size: 14.700px; font-weight: bold; line-height: 18px; }
.shead { display: flex; justify-content: space-between; padding: 17px 12px 10px 11px; height: 45px; }
.plus { width: 55px; height: 18px; border-radius: 2px; background: linear-gradient(#333,#333) 50% 50% / 9px 1.500px no-repeat, linear-gradient(#333,#333) 50% 50% / 1.500px 9px no-repeat, #e1e1e1; }
.view { height: 30px; display: flex; align-items: center; padding: 1px 17px 0 11px; font-weight: bold; }
.view span { flex: 1; font-size: 13.300px; }
.view em { color: #8f8f8f; }
.view.sel { background: #e2e2e2; }
.view.dim { color: #979797; }
.view small { font-size: 14px; width: 15px; color: #b5b5b5; font-weight: 400; }
.tagshead { padding: 17px 0 0 11px; height: 45px; }
.list { width: 349px; flex: none; background: #fff; border-right: 1px solid #dfdfdf; color: #000; }
.lhead { height: 91px; border-bottom: 1px solid #dfdfdf; padding: 16px 14px 0; }
.lrow { display: flex; justify-content: space-between; }
.list .plus { width: 57px; background-color: #f5f5f5; background-position: 22px 50%, 26px 50%; }
.search { margin-top: 14px; height: 28px; border-radius: 2px; background: #f5f5f5; color: #aaa; text-align: center; font-size: 14.700px; line-height: 29px; }
.lopts { height: 25px; border-bottom: 1px solid #dfdfdf; background: #f5f5f5; color: #2c2c2c; font-size: 11.600px; line-height: 25px; padding-left: 11px; display: flex; gap: 6px; }
.note { height: 87px; padding: 14px 0 0 15px; border-bottom: 1px solid #dfdfdf; white-space: nowrap; }
.note:has(time + time) { height: 105px; }
.note h4 { font-size: 15.600px; line-height: 20px; }
.note p { font-size: 14.300px; line-height: 21px; }
.note time { display: block; font-size: 12.500px; line-height: 18px; color: #888; }
.note.selected { background: #006fd9; color: #fff; }
.note.selected time { color: #55aef5; }
.note.bare { height: 69px; }
.bare time { margin-top: 3px; }
.editor { flex: 1; min-width: 0; background: #fff; display: flex; flex-direction: column; }
.ehead { height: 64px; flex: none; border-bottom: 1px solid #dfdfdf; display: flex; justify-content: space-between; padding: 15px 20px 0 14px; }
h1 { font-size: 16.600px; line-height: 20px; color: #000; }
.ehead p { font-size: 13.500px; line-height: 20px; color: #aaa; }
.ehead span { font-size: 11px; line-height: 18px; color: #b5b5b5; }
.emenu { height: 25px; flex: none; border-bottom: 1px solid #dfdfdf; background: #f5f5f5; display: flex; gap: 13px; padding-left: 10px; font-size: 11.600px; line-height: 25px; }
.ebody { flex: 1; min-height: 0; overflow: hidden; display: flex; justify-content: space-between; padding: 11px 4px 0 15px; }
.text { font: 15.700px/19px "DejaVu Sans Mono", monospace; color: #000; }
.text u { text-decoration: underline wavy #f33 1px; text-decoration-skip-ink: none; text-underline-offset: 2px; }
.ethumb { width: 9px; height: 257px; margin-top: -7px; border-radius: 4px; background: #dedede; border: 1px solid #d3d3d3; }
.nfoot { height: 32px; flex: none; border-top: 1px solid #dfdfdf; display: flex; align-items: center; font-size: 11.700px; padding: 2px 11px 0 10px; }
.dot { width: 11px; height: 11px; border-radius: 50%; background: #006fd9; margin-right: 7px; }
.acc { width: 57px; }
.hlp { width: 37px; }
.fsep { width: 1px; height: 32px; margin-top: -2px; background: #dfdfdf; margin-right: 13px; }
.fr { margin-left: auto; color: #888; margin-right: 14px; }
```
